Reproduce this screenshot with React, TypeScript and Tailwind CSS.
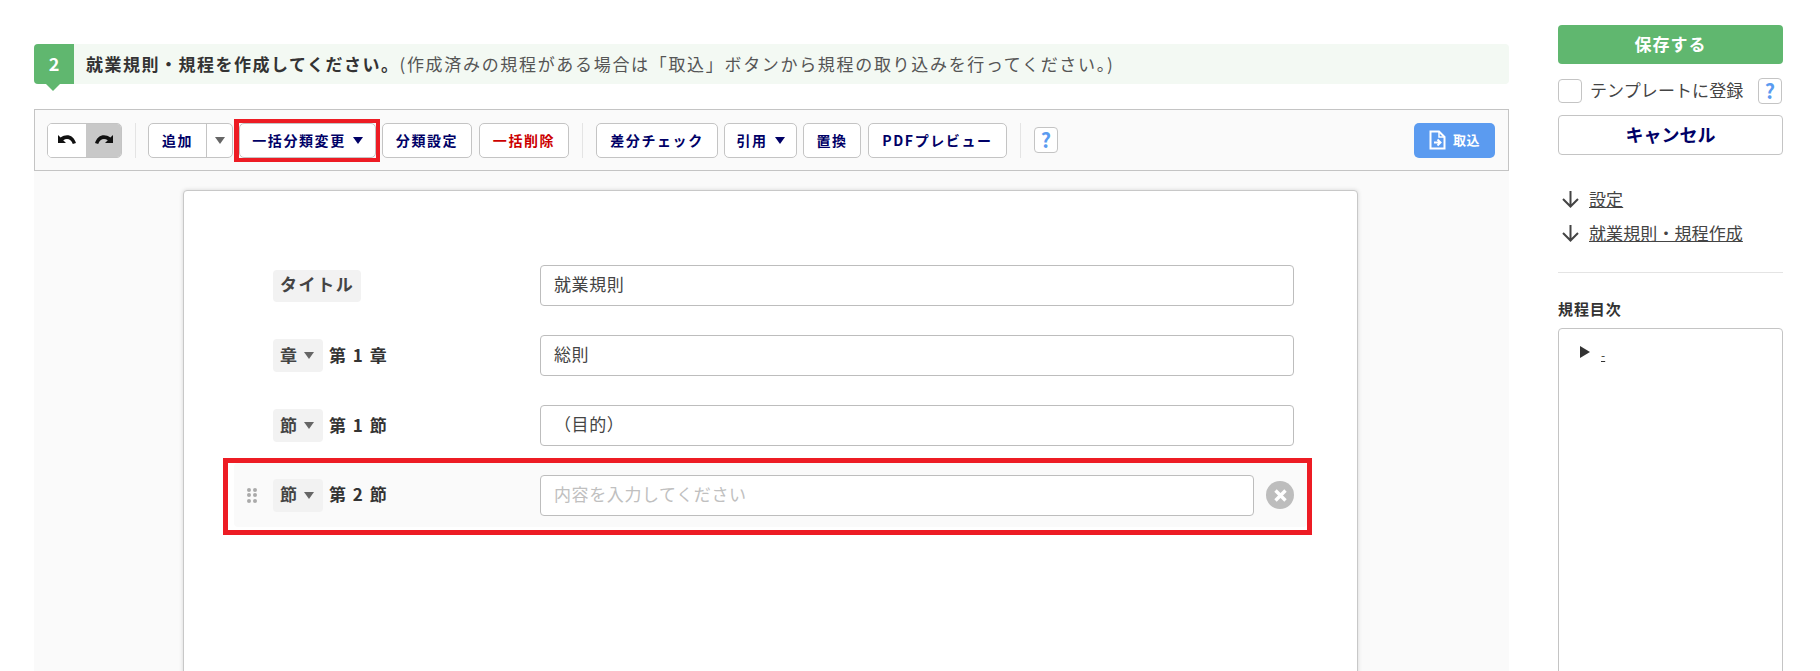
const jp = "font-['Noto_Sans_CJK_JP','Noto_Sans',sans-serif]";

function Caret({ className = "border-t-[#666]" }: { className?: string }) {
  return (
    <span
      className={`inline-block w-0 h-0 border-x-[5px] border-x-transparent border-t-[7px] ${className}`}
    />
  );
}

function ToolButton({
  label,
  caret,
  red,
  className = "",
}: {
  label: string;
  caret?: boolean;
  red?: boolean;
  className?: string;
}) {
  return (
    <button
      className={`h-[35px] flex items-center justify-center gap-[7px] bg-white border border-[#c4c4c4] rounded-[5px] text-[14px] font-bold tracking-[1.6px] ${
        red ? "text-[#cc0000]" : "text-[#000066]"
      } ${className}`}
    >
      {label}
      {caret && <Caret className="border-t-[#000066]" />}
    </button>
  );
}

function Help({ className = "" }: { className?: string }) {
  return (
    <span
      className={`w-[24px] h-[26px] flex items-center justify-center bg-white border border-[#c4c4c4] rounded-[4px] text-[#5b9bf0] text-[20px] font-bold leading-none ${className}`}
    >
      ?
    </span>
  );
}

function Separator() {
  return <div className="w-px h-[35px] bg-[#e4e4e4]" />;
}

function TextInput({
  value,
  placeholder,
  className = "w-[754px]",
}: {
  value?: string;
  placeholder?: string;
  className?: string;
}) {
  return (
    <div
      className={`h-[41px] flex items-center px-[13px] pb-[3px] bg-white border border-[#bdbdbd] rounded-[4px] text-[17px] tracking-[0.6px] ${
        value ? "text-[#444]" : "text-[#c0c0c0]"
      } ${className}`}
    >
      {value || placeholder}
    </div>
  );
}

function KindSelect({ kind }: { kind: string }) {
  return (
    <div className="w-[50px] h-[33px] flex items-center gap-[7px] pl-[7px] bg-[#f2f2f2] rounded-[4px] text-[17px] font-bold text-[#444]">
      <span className="mb-[2px]">{kind}</span>
      <Caret />
    </div>
  );
}

function SectionNo({ text }: { text: string }) {
  return (
    <span className="ml-[6px] mb-[2px] text-[17px] font-bold text-[#333] whitespace-pre [word-spacing:3px]">
      {text}
    </span>
  );
}

function Row({ kind, num, value }: { kind: string; num: string; value: string }) {
  return (
    <div className="flex items-center h-[41px] mb-[29px]">
      <div className="w-[267px] flex items-center">
        <KindSelect kind={kind} />
        <SectionNo text={num} />
      </div>
      <TextInput value={value} />
    </div>
  );
}

function ArrowDown() {
  return (
    <svg width="17" height="18" viewBox="0 0 17 18" className="mr-[10px] ml-[4px]" fill="none" stroke="#444" strokeWidth="2">
      <path d="M8.5 1 V16 M1 9 L8.5 16.5 L16 9" />
    </svg>
  );
}

export default function App() {
  return (
    <div className={`${jp} w-[1820px] h-[671px] overflow-hidden bg-white flex text-[#444]`}>
      {/* main column */}
      <div className="ml-[34px] w-[1475px] pt-[44px] flex flex-col">
        <div className="shrink-0 h-[40px] pb-[1px] flex items-center bg-[#f3f9f3] rounded-[4px] text-[17px] tracking-[1.5px] relative">
          <div className="w-[40px] h-[40px] flex items-center justify-center bg-[#60b76f] rounded-l-[4px] text-white font-bold text-[18px] tracking-normal relative">
            2
            <span className="absolute left-[12px] top-[40px] w-0 h-0 border-x-[7px] border-x-transparent border-t-[7px] border-t-[#60b76f]" />
          </div>
          <b className="ml-[12px] text-[#333]">就業規則・規程を作成してください。</b>
          <span className="text-[#555] tracking-[1.68px]">(作成済みの規程がある場合は「取込」ボタンから規程の取り込みを行ってください。)</span>
        </div>

        {/* toolbar */}
        <div className="shrink-0 mt-[25px] h-[62px] flex items-center pl-[12px] pr-[13px] bg-[#fafafa] border border-[#c4c4c4]">
          <div className="flex w-[75px] h-[35px] border border-[#c4c4c4] rounded-[5px] overflow-hidden">
            <span className="w-[38px] bg-white flex items-center justify-center">
              <svg width="18" height="12" viewBox="0 0 18 12" fill="#111">
                <path d="M0 1 L0 9 L8 9 L5.2 6.2 C6.4 5.4 7.8 5 9 5 C11.6 5 13.6 6.4 14.8 10 L18 9 C16.4 3.8 13 1.2 9 1.2 C7 1.2 4.6 2 2.6 3.6 Z" />
              </svg>
            </span>
            <span className="flex-1 bg-[#c8c8c8] flex items-center justify-center">
              <svg width="18" height="12" viewBox="0 0 18 12" fill="#111">
                <path d="M18 1 L18 9 L10 9 L12.8 6.2 C11.6 5.4 10.2 5 9 5 C6.4 5 4.4 6.4 3.2 10 L0 9 C1.6 3.8 5 1.2 9 1.2 C11 1.2 13.4 2 15.4 3.6 Z" />
              </svg>
            </span>
          </div>
          <div className="ml-[13px] mr-[12px]"><Separator /></div>
          <div className="flex w-[85px] h-[35px] bg-white border border-[#c4c4c4] rounded-[5px] text-[14px] font-bold tracking-[1.6px] text-[#000066]">
            <span className="w-[58px] flex items-center justify-center border-r border-[#c4c4c4]">追加</span>
            <span className="flex-1 flex items-center justify-center"><Caret /></span>
          </div>
          <div className="ml-[1px] border-y-[4px] border-l-[5px] border-r-[4px] border-[#ed1c24]">
            <ToolButton label="一括分類変更" caret className="w-[137px]" />
          </div>
          <ToolButton label="分類設定" className="w-[90px] ml-[2px]" />
          <ToolButton label="一括削除" red className="w-[90px] ml-[7px]" />
          <div className="mx-[13px]"><Separator /></div>
          <ToolButton label="差分チェック" className="w-[122px]" />
          <ToolButton label="引用" caret className="w-[73px] ml-[6px]" />
          <ToolButton label="置換" className="w-[58px] ml-[6px]" />
          <ToolButton label="PDFプレビュー" className="w-[139px] ml-[7px]" />
          <div className="mx-[13px]"><Separator /></div>
          <Help />
          <button className="ml-auto w-[81px] h-[35px] flex items-center justify-center gap-[7px] bg-[#5b9bf0] rounded-[5px] text-white text-[13px] font-bold tracking-[0.5px]">
            <svg width="17" height="20" viewBox="0 0 17 20" fill="none" stroke="#fff" strokeWidth="2">
              <path d="M1.5 1.5 H10 L15.5 7 V18.5 H1.5 Z" />
              <path d="M10 1.5 V7 H15.5" strokeWidth="1.5" />
              <path d="M5 12.5 H11.5 M8.5 9.5 L11.5 12.5 L8.5 15.5" />
            </svg>
            取込
          </button>
        </div>

        {/* document */}
        <div className="flex-1 min-h-0 bg-[#fafafa] pt-[19px] pl-[149px] pr-[151px]">
          <div className="h-[600px] bg-white border border-[#c8c8c8] rounded-[4px] shadow-[0_0_4px_rgba(0,0,0,0.15)] pt-[74px] pl-[89px] pr-[62px]">
            <div className="flex items-center h-[41px] mb-[29px]">
              <div className="w-[267px]">
                <span className="inline-block h-[32px] leading-[28px] px-[7px] bg-[#f2f2f2] rounded-[4px] text-[17px] font-bold tracking-[1.6px]">タイトル</span>
              </div>
              <TextInput value="就業規則" />
            </div>
            <Row kind="章" num="第 1 章" value="総則" />
            <Row kind="節" num="第 1 節" value="（目的）" />
            <div className="-ml-[50px] -mr-[17px] -mt-[17px] h-[77px] border-[5px] border-[#ed1c24] pl-[6px] pb-[3px]">
              <div className="h-[64px] flex items-center bg-[#fafafa] rounded-[4px] pl-[13px] pr-[12px]">
                <div className="w-[10px] mr-[16px] grid grid-cols-2 gap-x-[2px] gap-y-[1.5px]">
                  {[0, 1, 2, 3, 4, 5].map((d) => (
                    <span key={d} className="w-[4px] h-[4px] rounded-full bg-[#aaa]" />
                  ))}
                </div>
                <div className="w-[267px] flex items-center">
                  <KindSelect kind="節" />
                  <SectionNo text="第 2 節" />
                </div>
                <TextInput placeholder="内容を入力してください" className="w-[714px]" />
                <span className="ml-[12px] w-[28px] h-[28px] rounded-full bg-[#bdbdbd] flex items-center justify-center">
                  <svg width="15" height="15" viewBox="0 0 15 15">
                    <path d="M2.5 2.5 L12.5 12.5 M12.5 2.5 L2.5 12.5" stroke="#fff" strokeWidth="3.4" />
                  </svg>
                </span>
              </div>
            </div>
          </div>
        </div>
      </div>

      {/* sidebar */}
      <div className="ml-[49px] w-[225px] pt-[25px]">
        <button className="w-full h-[39px] pb-[2px] bg-[#60b76f] rounded-[4px] text-white text-[17px] font-bold tracking-[1px]">保存する</button>
        <div className="mt-[14px] h-[25px] flex items-center">
          <span className="w-[24px] h-[24px] bg-white border border-[#c4c4c4] rounded-[4px]" />
          <span className="ml-[8px] mb-[2px] text-[17px] tracking-[0.1px] text-[#444]">テンプレートに登録</span>
          <Help className="ml-auto mr-[1px]" />
        </div>
        <button className="mt-[12px] w-full h-[40px] pb-[2px] bg-white border border-[#c4c4c4] rounded-[4px] text-[#000066] text-[18px] font-bold">キャンセル</button>
        <div className="mt-[35px] flex flex-col gap-[16px] text-[17px] tracking-[0.1px] text-[#444]">
          <a className="flex items-center underline h-[18px]"><ArrowDown />設定</a>
          <a className="flex items-center underline h-[18px]"><ArrowDown />就業規則・規程作成</a>
        </div>
        <div className="mt-[30px] border-t border-[#e4e4e4]" />
        <div className="mt-[25px] text-[15px] font-bold text-[#333] tracking-[0.9px]">規程目次</div>
        <div className="mt-[7px] h-[400px] bg-white border border-[#c4c4c4] rounded-[4px] pt-[17px] pl-[21px] flex items-start">
          <span className="w-0 h-0 border-y-[6.5px] border-y-transparent border-l-[10px] border-l-[#333]" />
          <span className="ml-[11px] text-[12px] underline text-[#333]">-</span>
        </div>
      </div>
    </div>
  );
}
